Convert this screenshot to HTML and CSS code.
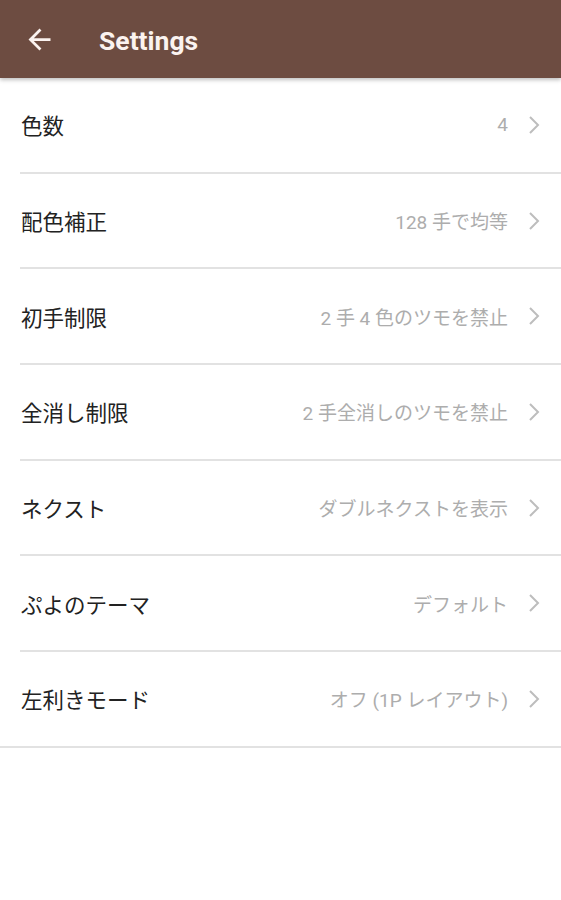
FILE: index.html
```html
<!DOCTYPE html>
<html lang="ja">
<head>
  <meta charset="UTF-8">
  <meta name="viewport" content="width=device-width, initial-scale=1.0">
  <title>Settings</title>
  <link rel="stylesheet" href="styles.css">
</head>
<body>
  <header class="toolbar">
    <button class="btn-back" aria-label="Back">
      <svg viewBox="0 0 24 24" width="33" height="33">
        <path d="M20 11H7.83l5.59-5.59L12 4l-8 8 8 8 1.41-1.41L7.83 13H20v-2z" fill="currentColor"/>
      </svg>
    </button>
    <h1 class="title">Settings</h1>
  </header>
  <ul class="settings">
    <li class="item">
      <span class="label">色数</span>
      <span class="value">4</span>
      <svg class="chevron" viewBox="0 0 12 18"><polyline points="2,1 10,9 2,17"/></svg>
    </li>
    <li class="item">
      <span class="label">配色補正</span>
      <span class="value">128 手で均等</span>
      <svg class="chevron" viewBox="0 0 12 18"><polyline points="2,1 10,9 2,17"/></svg>
    </li>
    <li class="item">
      <span class="label">初手制限</span>
      <span class="value">2 手 4 色のツモを禁止</span>
      <svg class="chevron" viewBox="0 0 12 18"><polyline points="2,1 10,9 2,17"/></svg>
    </li>
    <li class="item">
      <span class="label">全消し制限</span>
      <span class="value">2 手全消しのツモを禁止</span>
      <svg class="chevron" viewBox="0 0 12 18"><polyline points="2,1 10,9 2,17"/></svg>
    </li>
    <li class="item">
      <span class="label">ネクスト</span>
      <span class="value">ダブルネクストを表示</span>
      <svg class="chevron" viewBox="0 0 12 18"><polyline points="2,1 10,9 2,17"/></svg>
    </li>
    <li class="item">
      <span class="label">ぷよのテーマ</span>
      <span class="value">デフォルト</span>
      <svg class="chevron" viewBox="0 0 12 18"><polyline points="2,1 10,9 2,17"/></svg>
    </li>
    <li class="item last">
      <span class="label">左利きモード</span>
      <span class="value">オフ (1P レイアウト)</span>
      <svg class="chevron" viewBox="0 0 12 18"><polyline points="2,1 10,9 2,17"/></svg>
    </li>
  </ul>
</body>
</html>
```

FILE: styles.css
```css
* {
  margin: 0;
  padding: 0;
  box-sizing: border-box;
}
body {
  background-color: #fff;
  font-family: Roboto, "Noto Sans CJK JP", sans-serif;
}
header.toolbar {
  height: 78px;
  padding-left: 23px;
  background-color: #6d4c41;
  box-shadow: 0 2px 4px rgba(0, 0, 0, 0.25);
  display: flex;
  align-items: center;
  color: #fbf3f0;
  position: relative;
}
button.btn-back {
  width: 33px;
  height: 33px;
  border: none;
  background: none;
  color: inherit;
  display: flex;
}
h1.title {
  margin-left: 43px;
  padding-top: 3px;
  font-size: 26.5px;
  font-weight: 700;
}
ul.settings {
  list-style: none;
}
li.item {
  height: 95.7px;
  margin-left: 20px;
  padding-right: 21px;
  border-bottom: 2px solid #e2e2e2;
  display: flex;
  align-items: center;
}
li.item.last {
  margin-left: 0;
  padding-left: 20px;
}
.label {
  flex: 1;
  padding-left: 1px;
  color: #222;
  font-size: 21.5px;
  font-family: "Noto Sans CJK JP", sans-serif;
}
.value {
  color: #adadad;
  font-size: 19px;
  font-family: Roboto, "Noto Sans CJK JP", sans-serif;
}
svg.chevron {
  width: 12px;
  height: 18px;
  margin-left: 20px;
  fill: none;
  stroke: #bdbdbd;
  stroke-width: 2;
}
```
